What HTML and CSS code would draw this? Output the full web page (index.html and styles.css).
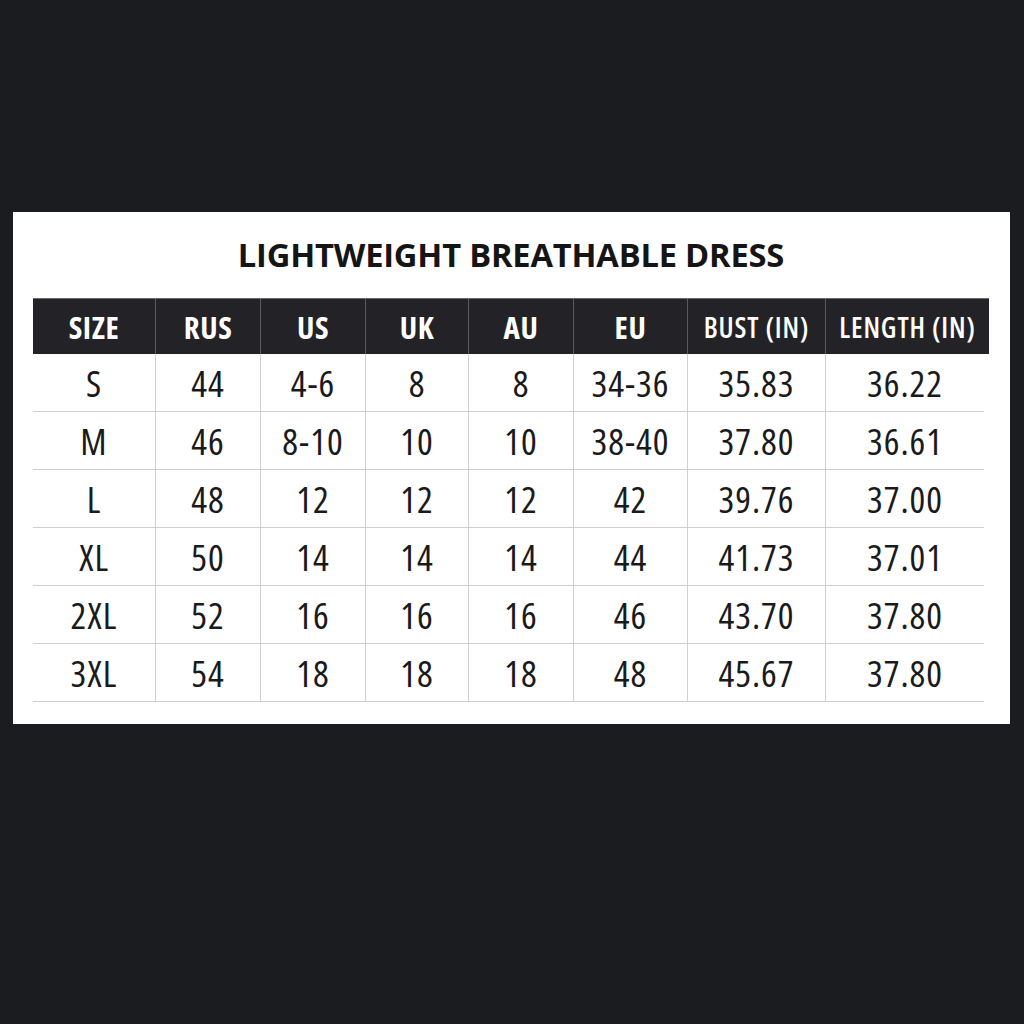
FILE: index.html
```html
<!DOCTYPE html>
<html>
<head>
<meta charset="utf-8">
<link rel="stylesheet" href="styles.css">
</head>
<body>
<div class="card">
  <h1 class="title">LIGHTWEIGHT BREATHABLE DRESS</h1>
  <div class="table">
    <div class="row head">
      <div class="cell">SIZE</div>
      <div class="cell">RUS</div>
      <div class="cell">US</div>
      <div class="cell">UK</div>
      <div class="cell">AU</div>
      <div class="cell">EU</div>
      <div class="cell small">BUST (IN)</div>
      <div class="cell small">LENGTH (IN)</div>
    </div>
    <div class="row">
      <div class="cell">S</div><div class="cell">44</div><div class="cell">4-6</div><div class="cell">8</div><div class="cell">8</div><div class="cell">34-36</div><div class="cell">35.83</div><div class="cell">36.22</div>
    </div>
    <div class="row">
      <div class="cell">M</div><div class="cell">46</div><div class="cell">8-10</div><div class="cell">10</div><div class="cell">10</div><div class="cell">38-40</div><div class="cell">37.80</div><div class="cell">36.61</div>
    </div>
    <div class="row">
      <div class="cell">L</div><div class="cell">48</div><div class="cell">12</div><div class="cell">12</div><div class="cell">12</div><div class="cell">42</div><div class="cell">39.76</div><div class="cell">37.00</div>
    </div>
    <div class="row">
      <div class="cell">XL</div><div class="cell">50</div><div class="cell">14</div><div class="cell">14</div><div class="cell">14</div><div class="cell">44</div><div class="cell">41.73</div><div class="cell">37.01</div>
    </div>
    <div class="row">
      <div class="cell">2XL</div><div class="cell">52</div><div class="cell">16</div><div class="cell">16</div><div class="cell">16</div><div class="cell">46</div><div class="cell">43.70</div><div class="cell">37.80</div>
    </div>
    <div class="row">
      <div class="cell">3XL</div><div class="cell">54</div><div class="cell">18</div><div class="cell">18</div><div class="cell">18</div><div class="cell">48</div><div class="cell">45.67</div><div class="cell">37.80</div>
    </div>
  </div>
</div>
</body>
</html>
```
FILE: styles.css
```css
html, body {
  margin: 0;
  padding: 0;
  background: #1b1c20;
  height: 1024px;
  overflow: hidden;
}
body {
  box-sizing: border-box;
  padding-top: 212px;
  font-family: "Open Sans", "Noto Sans", sans-serif;
}
.card {
  margin-left: 13px;
  width: 997px;
  height: 512px;
  background: #ffffff;
  box-sizing: border-box;
  padding: 20px 0 0 20px;
}
.title {
  margin: 0;
  height: 66px;
  line-height: 46px;
  text-align: center;
  font-size: 32.7px;
  font-weight: 700;
  font-stretch: 100%;
  letter-spacing: -0.2px;
  color: #151515;
  width: 956px;
}
.table {
  width: 956px;
}
.row {
  display: grid;
  grid-template-columns: 122px 105px 105px 103px 105px 114px 138px 159px;
  height: 58px;
  border-bottom: 1px solid #cfcfcf;
  box-sizing: border-box;
  width: 951px;
}
.row .cell {
  display: flex;
  align-items: center;
  justify-content: center;
  font-size: 37px;
  font-stretch: 78%;
  letter-spacing: 1px;
  color: #1a1a1a;
  border-left: 1px solid #d0d0d0;
}
.row .cell:first-child {
  border-left: none;
}
.row.head {
  grid-template-columns: 122px 105px 105px 103px 105px 114px 138px 164px;
  width: 956px;
  height: 56px;
  background: #232327;
  border-top: 1px solid #6a6a6a;
  border-bottom: none;
}
.row.head .cell {
  color: #ffffff;
  font-size: 31px;
  font-weight: 700;
  font-stretch: 78%;
  letter-spacing: 0.6px;
  border-left: 1px solid #5a5a5c;
}
.row.head .cell:first-child {
  border-left: none;
}
.row.head .cell.small {
  font-size: 28px;
  font-weight: 600;
  font-stretch: 78%;
  letter-spacing: 0.9px;
}
```
